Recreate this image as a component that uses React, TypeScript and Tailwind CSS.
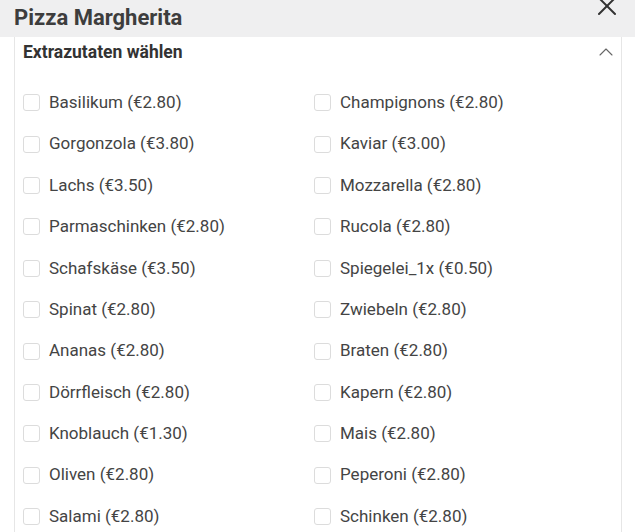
import { X, ChevronUp } from "lucide-react";

const items: [string, string][] = [
  ["Basilikum (€2.80)", "Champignons (€2.80)"],
  ["Gorgonzola (€3.80)", "Kaviar (€3.00)"],
  ["Lachs (€3.50)", "Mozzarella (€2.80)"],
  ["Parmaschinken (€2.80)", "Rucola (€2.80)"],
  ["Schafskäse (€3.50)", "Spiegelei_1x (€0.50)"],
  ["Spinat (€2.80)", "Zwiebeln (€2.80)"],
  ["Ananas (€2.80)", "Braten (€2.80)"],
  ["Dörrfleisch (€2.80)", "Kapern (€2.80)"],
  ["Knoblauch (€1.30)", "Mais (€2.80)"],
  ["Oliven (€2.80)", "Peperoni (€2.80)"],
  ["Salami (€2.80)", "Schinken (€2.80)"],
];

function Option({ label }: { label: string }) {
  return (
    <label className="flex items-center gap-[9px] h-[41.4px] cursor-pointer">
      <span className="w-[17px] h-[17px] rounded-[3px] border border-[#dcdcdc] bg-white shrink-0" />
      <span className="text-[17px] text-[#444]">{label}</span>
    </label>
  );
}

export default function App() {
  return (
    <div className="w-[635px] h-[532px] overflow-hidden bg-white font-['Roboto',sans-serif]">
      {/* Modal header */}
      <div className="h-[37px] bg-[#efeff0] flex justify-between pl-[14px] pr-[12px]">
        <h1 className="text-[22px] font-bold text-[#3d3d3d] leading-none pt-[7px]">Pizza Margherita</h1>
        <X className="w-[32px] h-[32px] text-[#333] -mt-[10px]" strokeWidth={1.5} />
      </div>

      {/* Accordion card */}
      <div className="ml-[14px] mr-[13px] border-x border-[#e6e6e6] h-full">
        <div className="h-[30px] flex items-center justify-between pl-[8px] pr-[3px]">
          <span className="text-[17.5px] font-bold text-[#333]">Extrazutaten wählen</span>
          <ChevronUp className="w-[24px] h-[24px] text-[#666]" strokeWidth={1.1} />
        </div>
        <div className="grid grid-cols-[291px_1fr] pl-[8px] pt-[15px]">
          {items.map(([a, b]) => (
            <>
              <Option key={a} label={a} />
              <Option key={b} label={b} />
            </>
          ))}
        </div>
      </div>
    </div>
  );
}
